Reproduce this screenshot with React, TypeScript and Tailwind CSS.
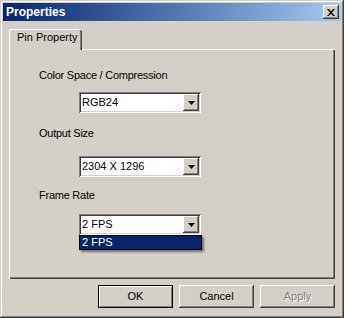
import React from "react";

const raised =
  "shadow-[inset_-1px_-1px_#404040,inset_1px_1px_#ffffff,inset_-2px_-2px_#808080,inset_2px_2px_#d4d0c8]";

function Combo({ value, open }: { value: string; open?: boolean }) {
  return (
    <div className="relative ml-[40px] w-[122px] h-[21px] flex bg-white p-[2px] shadow-[inset_1px_1px_#808080,inset_-1px_-1px_#ffffff,inset_2px_2px_#404040,inset_-2px_-2px_#d4d0c8]">
      <div className="flex-1 pl-[1px] leading-[17px] text-[11px] text-black">{value}</div>
      <div className={`w-[16px] h-[17px] bg-[#d4d0c8] flex items-center justify-center ${raised}`}>
        <svg width="7" height="4" viewBox="0 0 7 4">
          <path d="M0 0h7L3.5 4z" fill="#000" />
        </svg>
      </div>
      {open && (
        <div className="absolute left-0 top-[21px] w-[123px] h-[15px] border border-black bg-[#0a246a] text-white text-[11px] leading-[13px] pl-[2px] shadow-[2px_2px_2px_rgba(0,0,0,0.45)] z-20">
          {value}
        </div>
      )}
    </div>
  );
}

function Button({ label, primary, disabled }: { label: string; primary?: boolean; disabled?: boolean }) {
  return (
    <div
      className={`w-[75px] h-[23px] flex items-center justify-center text-[11px] bg-[#d4d0c8] ${
        primary
          ? "border border-black shadow-[inset_1px_1px_#ffffff,inset_-1px_-1px_#808080]"
          : raised
      } ${disabled ? "text-[#808080] [text-shadow:1px_1px_0_#ffffff]" : "text-black"}`}
    >
      {label}
    </div>
  );
}

export default function App() {
  return (
    <div className="w-[344px] h-[318px] bg-[#d4d0c8] p-[3px] flex flex-col font-['Liberation_Sans',Arial,sans-serif] shadow-[inset_-1px_-1px_#404040,inset_1px_1px_#d4d0c8,inset_-2px_-2px_#808080,inset_2px_2px_#ffffff]">
      {/* title bar */}
      <div className="h-[18px] flex items-center justify-between pl-[3px] pr-[2px] bg-linear-to-r from-[#0a246a] to-[#a6caf0]">
        <span className="text-white font-bold text-[12px] leading-[14px]">Properties</span>
        <div className={`w-[16px] h-[14px] bg-[#d4d0c8] flex items-center justify-center ${raised}`}>
          <svg width="8" height="7" viewBox="0 0 8 7">
            <path d="M0 0h2l2 2.5L6 0h2L5 3.5 8 7H6L4 4.5 2 7H0l3-3.5z" fill="#000" />
          </svg>
        </div>
      </div>

      {/* tabs */}
      <div className="mt-[8px] px-[6px] flex flex-col">
        <div className="flex">
          <div className="relative z-10 -mb-[1px] w-[73px] h-[21px] bg-[#d4d0c8] border-l border-t border-white rounded-t-[2px] pl-[7px] pt-[1px] text-[11px] leading-[13px] text-black shadow-[inset_-1px_0_#404040,inset_-2px_0_#808080]">
            Pin Property
          </div>
        </div>
        <div className="h-[230px] border-l border-t border-white pt-[19px] pl-[29px] shadow-[inset_-1px_-1px_#404040,inset_-2px_-2px_#808080] text-[11px] leading-[13px] tracking-[-0.25px] text-black">
          <div>Color Space / Compression</div>
          <div className="mt-[10px] tracking-normal">
            <Combo value="RGB24" />
          </div>
          <div className="mt-[14px]">Output Size</div>
          <div className="mt-[16px] tracking-normal">
            <Combo value="2304 X 1296" />
          </div>
          <div className="mt-[12px]">Frame Rate</div>
          <div className="mt-[12px] tracking-normal">
            <Combo value="2 FPS" open />
          </div>
        </div>
      </div>

      {/* buttons */}
      <div className="mt-[6px] pr-[6px] flex justify-end gap-[6px]">
        <Button label="OK" primary />
        <Button label="Cancel" />
        <Button label="Apply" disabled />
      </div>
    </div>
  );
}
